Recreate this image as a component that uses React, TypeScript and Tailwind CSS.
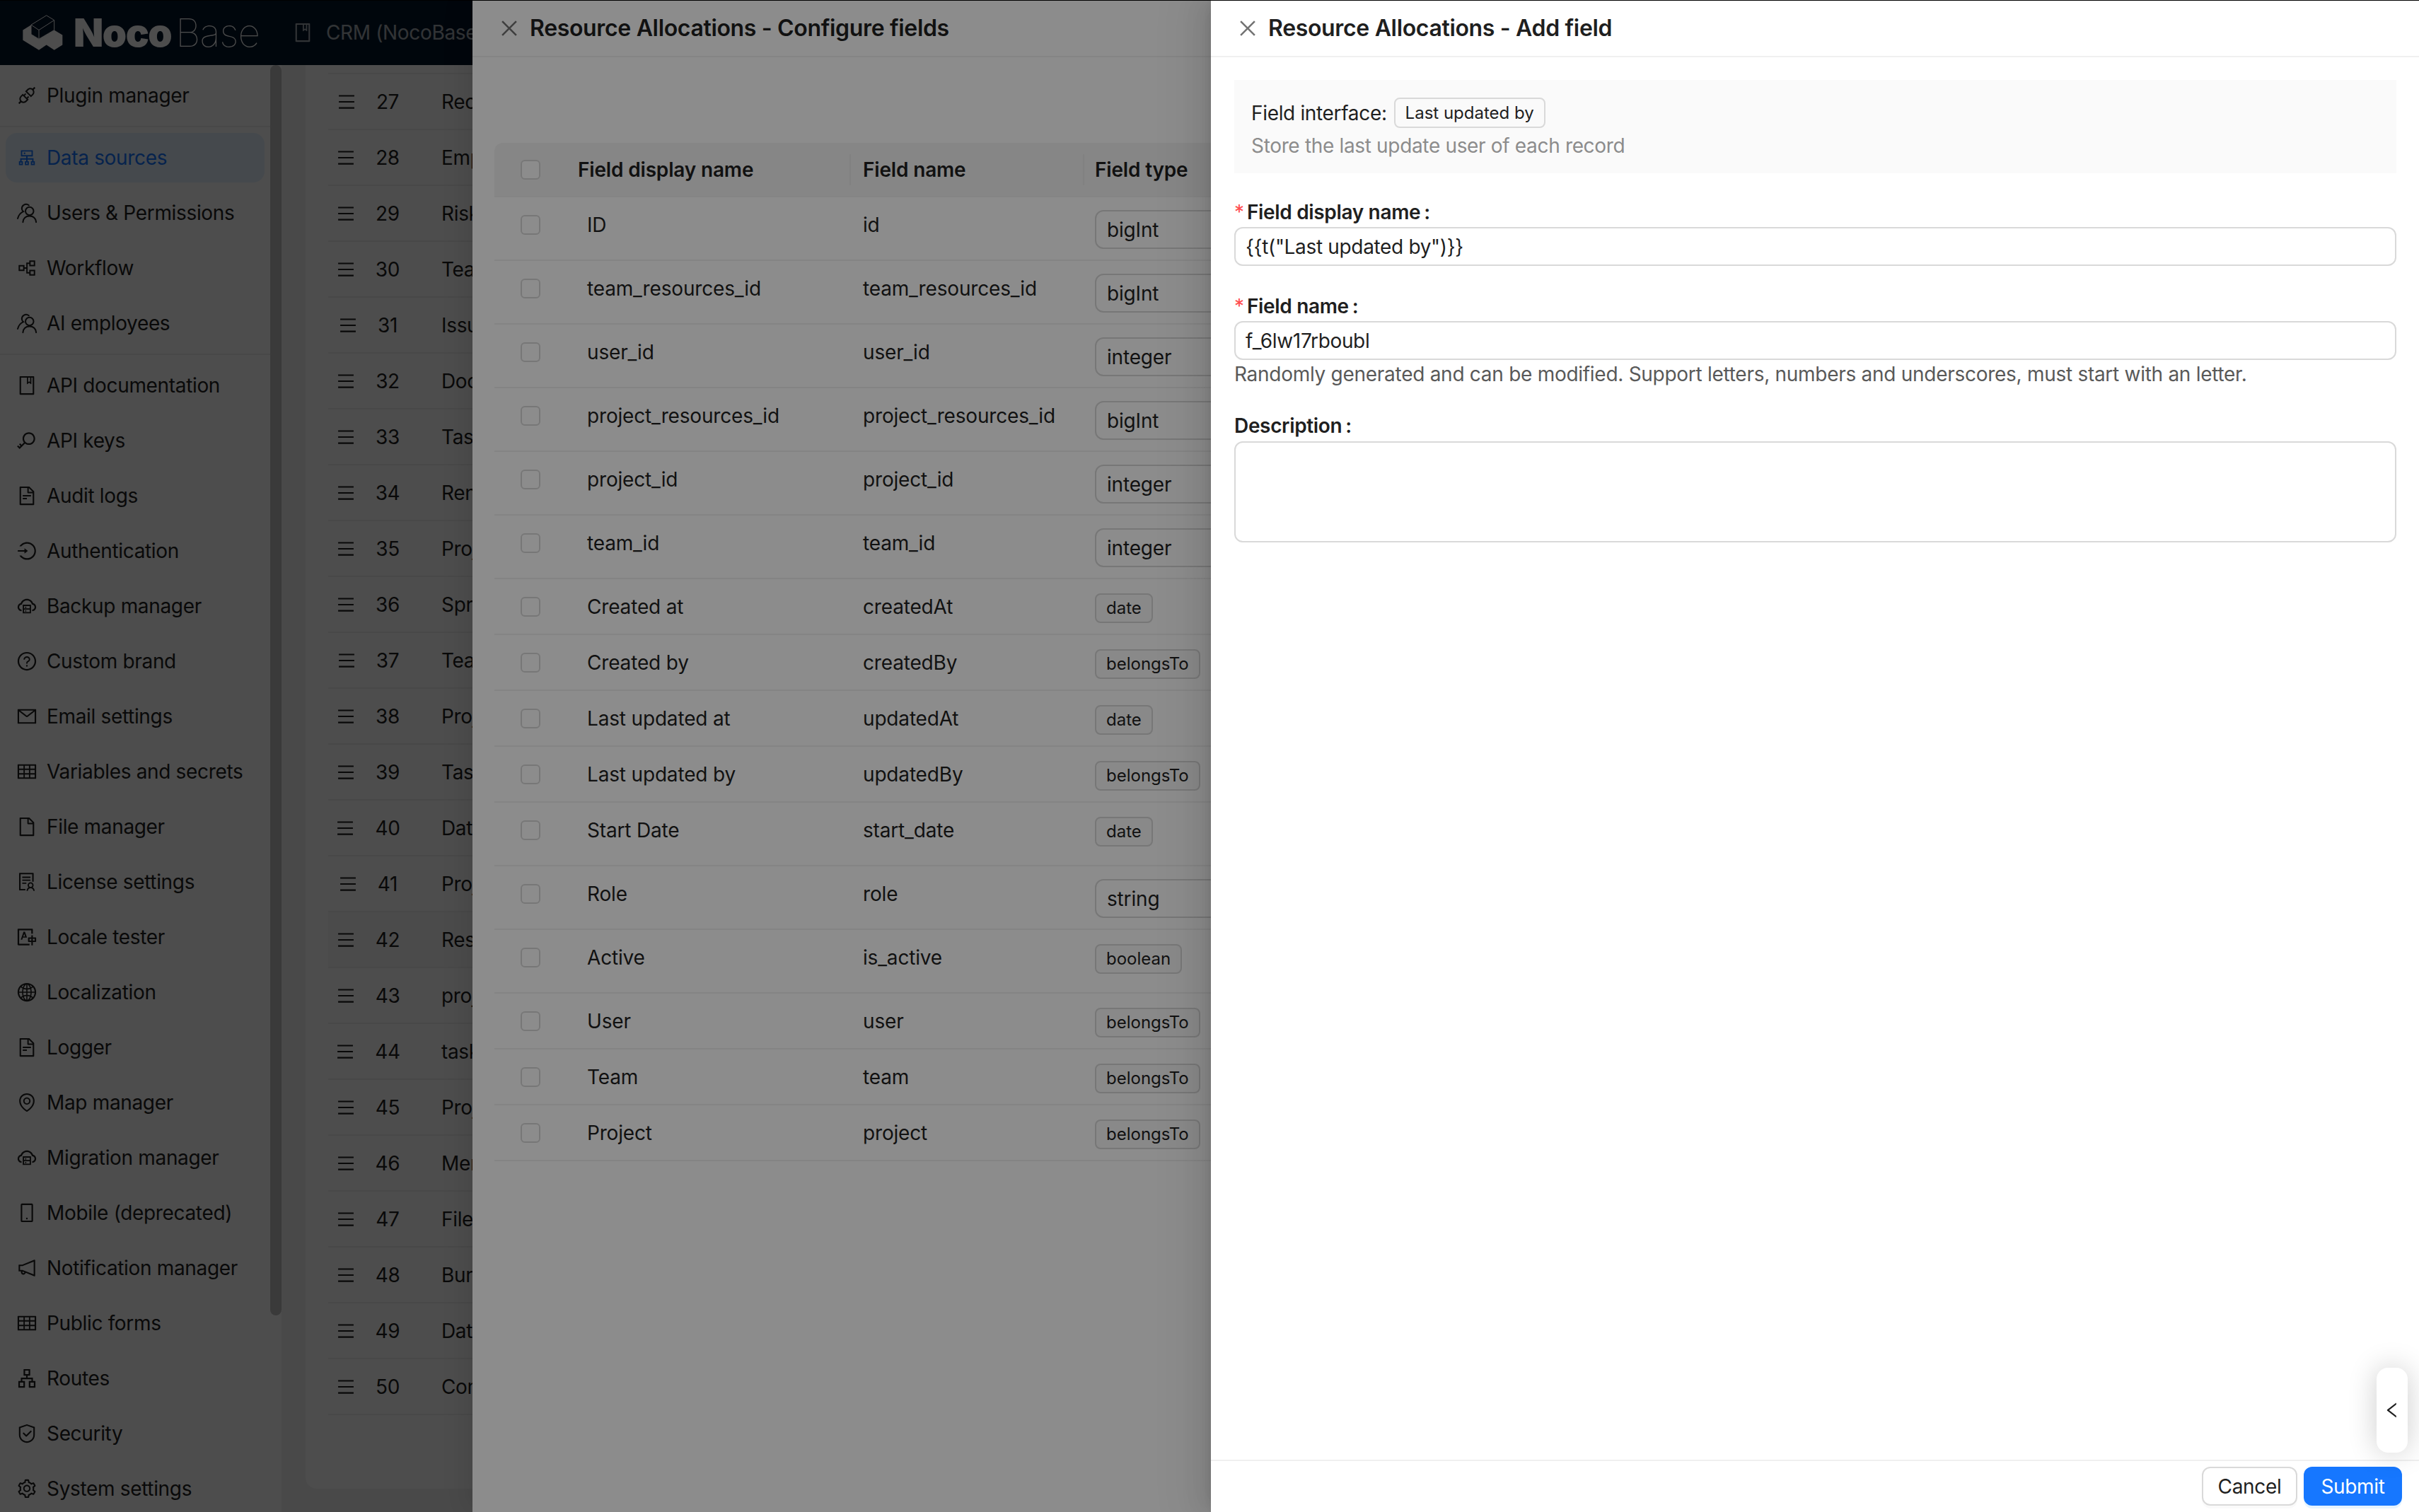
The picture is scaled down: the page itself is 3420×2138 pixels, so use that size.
import type { IconType } from 'react-icons';
import {
  AiOutlineApartment,
  AiOutlineApi,
  AiOutlineBook,
  AiOutlineClose,
  AiOutlineCloudServer,
  AiOutlineCluster,
  AiOutlineEnvironment,
  AiOutlineFile,
  AiOutlineFileText,
  AiOutlineGlobal,
  AiOutlineKey,
  AiOutlineLeft,
  AiOutlineLogin,
  AiOutlineMail,
  AiOutlineMenu,
  AiOutlineMobile,
  AiOutlineNotification,
  AiOutlinePartition,
  AiOutlineQuestionCircle,
  AiOutlineSafety,
  AiOutlineSetting,
  AiOutlineSolution,
  AiOutlineTable,
  AiOutlineTranslation,
} from 'react-icons/ai';

function UsersIcon({ className }: { className?: string }) {
  return (
    <svg viewBox="0 0 24 24" fill="none" stroke="currentColor" strokeWidth="1.6" strokeLinecap="round" className={className}>
      <circle cx="15" cy="10" r="4.6" />
      <path d="M7.5 22.5C8 18 11 15.6 15 15.6s7 2.4 7.5 6.9" />
      <path d="M14.2 3.4A4.8 4.8 0 0 0 6.6 8.6c.3.8.8 1.4 1.4 1.9C5 11.8 2.6 14.6 1.6 18.4" />
    </svg>
  );
}

type NavItem = { label: string; Icon: IconType | typeof UsersIcon; active?: boolean } | 'divider';

const NAV: NavItem[] = [
  { label: 'Plugin manager', Icon: AiOutlineApi },
  'divider',
  { label: 'Data sources', Icon: AiOutlineCluster, active: true },
  { label: 'Users & Permissions', Icon: UsersIcon },
  { label: 'Workflow', Icon: AiOutlinePartition },
  { label: 'AI employees', Icon: UsersIcon },
  'divider',
  { label: 'API documentation', Icon: AiOutlineBook },
  { label: 'API keys', Icon: AiOutlineKey },
  { label: 'Audit logs', Icon: AiOutlineFileText },
  { label: 'Authentication', Icon: AiOutlineLogin },
  { label: 'Backup manager', Icon: AiOutlineCloudServer },
  { label: 'Custom brand', Icon: AiOutlineQuestionCircle },
  { label: 'Email settings', Icon: AiOutlineMail },
  { label: 'Variables and secrets', Icon: AiOutlineTable },
  { label: 'File manager', Icon: AiOutlineFile },
  { label: 'License settings', Icon: AiOutlineSolution },
  { label: 'Locale tester', Icon: AiOutlineTranslation },
  { label: 'Localization', Icon: AiOutlineGlobal },
  { label: 'Logger', Icon: AiOutlineFileText },
  { label: 'Map manager', Icon: AiOutlineEnvironment },
  { label: 'Migration manager', Icon: AiOutlineCloudServer },
  { label: 'Mobile (deprecated)', Icon: AiOutlineMobile },
  { label: 'Notification manager', Icon: AiOutlineNotification },
  { label: 'Public forms', Icon: AiOutlineTable },
  { label: 'Routes', Icon: AiOutlineApartment },
  { label: 'Security', Icon: AiOutlineSafety },
  { label: 'System settings', Icon: AiOutlineSetting },
];

// the collection list behind the drawers, only the first letters show
const COLLECTIONS = [
  'Records', 'Employees', 'Risks', 'Teams', 'Issues', 'Documents', 'Tasks', 'Renewals',
  'Projects', 'Sprints', 'Team members', 'Project phases', 'Task comments', 'Data logs',
  'Project roles', 'Resources', 'project_tags', 'task_tags', 'Project files', 'Members',
  'Files', 'Burndown', 'Data tables', 'Comments',
];

type Field = { title: string; name: string; type: string; input?: boolean; tall?: boolean };

const FIELDS: Field[] = [
  { title: 'ID', name: 'id', type: 'bigInt', input: true },
  { title: 'team_resources_id', name: 'team_resources_id', type: 'bigInt', input: true },
  { title: 'user_id', name: 'user_id', type: 'integer', input: true },
  { title: 'project_resources_id', name: 'project_resources_id', type: 'bigInt', input: true },
  { title: 'project_id', name: 'project_id', type: 'integer', input: true },
  { title: 'team_id', name: 'team_id', type: 'integer', input: true },
  { title: 'Created at', name: 'createdAt', type: 'date' },
  { title: 'Created by', name: 'createdBy', type: 'belongsTo' },
  { title: 'Last updated at', name: 'updatedAt', type: 'date' },
  { title: 'Last updated by', name: 'updatedBy', type: 'belongsTo' },
  { title: 'Start Date', name: 'start_date', type: 'date', tall: true },
  { title: 'Role', name: 'role', type: 'string', input: true },
  { title: 'Active', name: 'is_active', type: 'boolean', tall: true },
  { title: 'User', name: 'user', type: 'belongsTo' },
  { title: 'Team', name: 'team', type: 'belongsTo' },
  { title: 'Project', name: 'project', type: 'belongsTo' },
];

const COLS = 'grid grid-cols-[104px_398px_330px_1fr]';

export default function App() {
  return (
    <div className="relative h-screen w-full overflow-hidden bg-[#f5f5f5] font-[Inter,sans-serif] text-[28px] tracking-[-0.012em] text-[#1f1f1f]">
      <TopBar />
      <div className="flex h-[2046px]">
        <Sidebar />
        <CollectionList />
      </div>

      {/* ---- first drawer ---- */}
      <div className="absolute inset-0 bg-black/45" />
      <ConfigureDrawer />

      {/* ---- second drawer ---- */}
      <div className="absolute inset-0 bg-black/45" />
      <AddFieldDrawer />

      <div className="absolute inset-x-0 top-0 h-px bg-black" />
    </div>
  );
}

function TopBar() {
  return (
    <header className="flex h-[92px] items-center bg-[#001529] pl-[30px]">
      <svg viewBox="30 30 180 155" className="h-[52px] w-[60px] shrink-0">
        <path
          d="M37 97 72 75v40l33 20 65-38 35 21v42l-35 22-33-22-32 22-68-42z"
          fill="#fff"
        />
        <path
          d="M72 75 137 35l33 20v42l-65 38-33-20zM72 75l33 22 65-42M105 97v38"
          fill="#001529"
          stroke="#fff"
          strokeWidth="3"
          strokeLinejoin="round"
        />
      </svg>
      <span className="ml-[14px] text-[55px] leading-none font-black tracking-[-1.5px] text-white">Noco</span>
      <span className="ml-[6px] text-[55px] leading-none font-thin tracking-[-1px] text-white">Base</span>
      <AiOutlineBook className="ml-[46px] h-[30px] w-[30px] shrink-0 text-white/65" />
      <span className="ml-[18px] whitespace-nowrap text-white/65">CRM (NocoBase</span>
    </header>
  );
}

function Sidebar() {
  return (
    <aside className="relative w-[398px] shrink-0 overflow-hidden bg-white pt-1">
      {NAV.map((item, i) =>
        item === 'divider' ? (
          <div key={i} className="flex h-[10px] items-center">
            <div className="h-0.5 w-[382px] bg-[#f0f0f0]" />
          </div>
        ) : (
          <div key={item.label} className="py-1 pr-6 pl-2">
            <div
              className={`flex h-[70px] items-center gap-[13px] rounded-2xl pl-[15px] ${
                item.active ? 'bg-[#e6f4ff] text-[#1677ff]' : ''
              }`}
            >
              <item.Icon className="h-[30px] w-[30px] shrink-0" />
              <span className="whitespace-nowrap">{item.label}</span>
            </div>
          </div>
        ),
      )}
      {/* scrollbar thumb */}
      <div className="absolute top-0 right-0 h-[1768px] w-4 rounded-lg bg-[#c1c1c1]" />
    </aside>
  );
}

function CollectionList() {
  return (
    <main className="min-w-0 flex-1 pl-[34px]">
      <div className="h-[2013px] rounded-b-2xl bg-white pl-8">
        <div className="h-[13px] border-b-2 border-[#f0f0f0]" />
        {COLLECTIONS.map((name, i) => (
          <div
            key={name}
            className={`flex h-[79px] items-center border-b-2 border-[#f0f0f0] ${27 + i === 42 ? 'bg-[#fafafa]' : ''}`}
          >
            <div className="flex w-[112px] items-center justify-center gap-[28px]">
              <AiOutlineMenu className="h-7 w-7 shrink-0" />
              <span>{27 + i}</span>
            </div>
            <span className="ml-[48px] whitespace-nowrap">{name}</span>
          </div>
        ))}
      </div>
    </main>
  );
}

function Checkbox() {
  return <div className="h-7 w-7 rounded-md border-2 border-[#d9d9d9] bg-white" />;
}

function ConfigureDrawer() {
  return (
    <section className="absolute inset-y-0 right-0 left-[668px] bg-white shadow-[-12px_0_32px_rgba(0,0,0,0.08)]">
      <DrawerHeader title="Resource Allocations - Configure fields" />
      <div className="mt-[121px] ml-[31px] tracking-[-0.006em]">
        <div className={`${COLS} h-[77px] items-center rounded-t-xl border-b-2 border-[#f0f0f0] bg-[#f5f5f5] font-semibold`}>
          <div className="pl-[37px]">
            <Checkbox />
          </div>
          <div className="pl-[14px]">Field display name</div>
          <div className="border-l-2 border-[#ebebeb] pl-[17px] leading-[44px]">Field name</div>
          <div className="border-l-2 border-[#ebebeb] pl-[15px] leading-[44px]">Field type</div>
        </div>
        {FIELDS.map((f) => (
          <div
            key={f.name}
            className={`${COLS} border-b-2 border-[#f0f0f0] ${f.input || f.tall ? 'h-[90px]' : 'h-[79px]'}`}
          >
            <div className="pt-[25px] pl-[37px]">
              <Checkbox />
            </div>
            <div className="pt-[17px] pl-[27px] leading-[44px]">{f.title}</div>
            <div className="pt-[17px] pl-[19px] leading-[44px]">{f.name}</div>
            <div className="pt-[18px] pl-[17px]">
              {f.input ? (
                <div className="flex h-[55px] w-[400px] items-center rounded-xl border-2 border-[#d9d9d9] pl-[15px]">
                  {f.type}
                </div>
              ) : (
                <span className="inline-flex h-[42px] items-center rounded-lg border-2 border-[#d9d9d9] bg-[#fafafa] px-[14px] text-2xl tracking-normal">
                  {f.type}
                </span>
              )}
            </div>
          </div>
        ))}
      </div>
    </section>
  );
}

function DrawerHeader({ title }: { title: string }) {
  return (
    <div className="flex h-[81px] items-center gap-[13px] border-b-2 border-[#f0f0f0] pl-[36px]">
      <AiOutlineClose className="h-8 w-8 shrink-0 text-[#737373]" />
      <h2 className="text-[32px] font-semibold whitespace-nowrap">{title}</h2>
    </div>
  );
}

function FieldLabel({ text, required }: { text: string; required?: boolean }) {
  return (
    <div className="flex h-8 items-center font-semibold">
      {required && <span className="mr-[9px] w-[9px] font-normal text-[#ff4d4f]">*</span>}
      <span>{text}</span>
      <span className="ml-[5px]">:</span>
    </div>
  );
}

function TextBox({ value }: { value: string }) {
  return (
    <div className="mt-[5px] flex h-[55px] items-center rounded-xl border-2 border-[#d9d9d9] pl-[14px]">
      {value}
    </div>
  );
}

function AddFieldDrawer() {
  return (
    <section className="absolute inset-y-0 right-0 left-[1712px] flex flex-col bg-white shadow-[-12px_0_32px_rgba(0,0,0,0.08),-6px_0_12px_-8px_rgba(0,0,0,0.12),-18px_0_56px_16px_rgba(0,0,0,0.05)]">
      <DrawerHeader title="Resource Allocations - Add field" />

      <div className="flex-1 pt-8 pr-8 pl-[33px]">
        <div className="h-[132px] bg-[#fafafa] px-6 pt-[25px]">
          <div className="flex h-[43px] items-center gap-[10px]">
            <span>Field interface:</span>
            <span className="inline-flex h-[43px] items-center rounded-lg border-2 border-[#d9d9d9] bg-[#fafafa] px-[14px] text-2xl tracking-normal">
              Last updated by
            </span>
          </div>
          <p className="mt-[5px] leading-[40px] text-[#8c8c8c]">Store the last update user of each record</p>
        </div>

        <div className="mt-[39px]">
          <FieldLabel text="Field display name" required />
          <TextBox value={'{{t("Last updated by")}}'} />
        </div>

        <div className="mt-[41px]">
          <FieldLabel text="Field name" required />
          <TextBox value="f_6lw17rboubl" />
          <p className="leading-[40px] tracking-[-0.01em] text-[#595959]">
            Randomly generated and can be modified. Support letters, numbers and underscores, must start with an letter.
          </p>
        </div>

        <div className="mt-[37px]">
          <FieldLabel text="Description" />
          <div className="mt-[6px] h-[143px] rounded-xl border-2 border-[#d9d9d9]" />
        </div>
      </div>

      <div className="flex h-[74px] justify-end gap-[9px] border-t-2 border-[#f0f0f0] pt-2 pr-6">
        <button className="h-[55px] w-[135px] rounded-xl border-2 border-[#d9d9d9] bg-white shadow-[0_4px_0_rgba(0,0,0,0.02)]">
          Cancel
        </button>
        <button className="h-[55px] w-[139px] rounded-xl bg-[#1677ff] text-white shadow-[0_4px_0_rgba(5,145,255,0.1)]">
          Submit
        </button>
      </div>

      {/* collapsed side panel handle */}
      <div className="absolute right-4 bottom-[84px] flex h-[120px] w-11 items-center justify-center rounded-2xl bg-white shadow-[0_0_40px_rgba(0,0,0,0.2)]">
        <AiOutlineLeft className="h-7 w-7" />
      </div>
    </section>
  );
}
